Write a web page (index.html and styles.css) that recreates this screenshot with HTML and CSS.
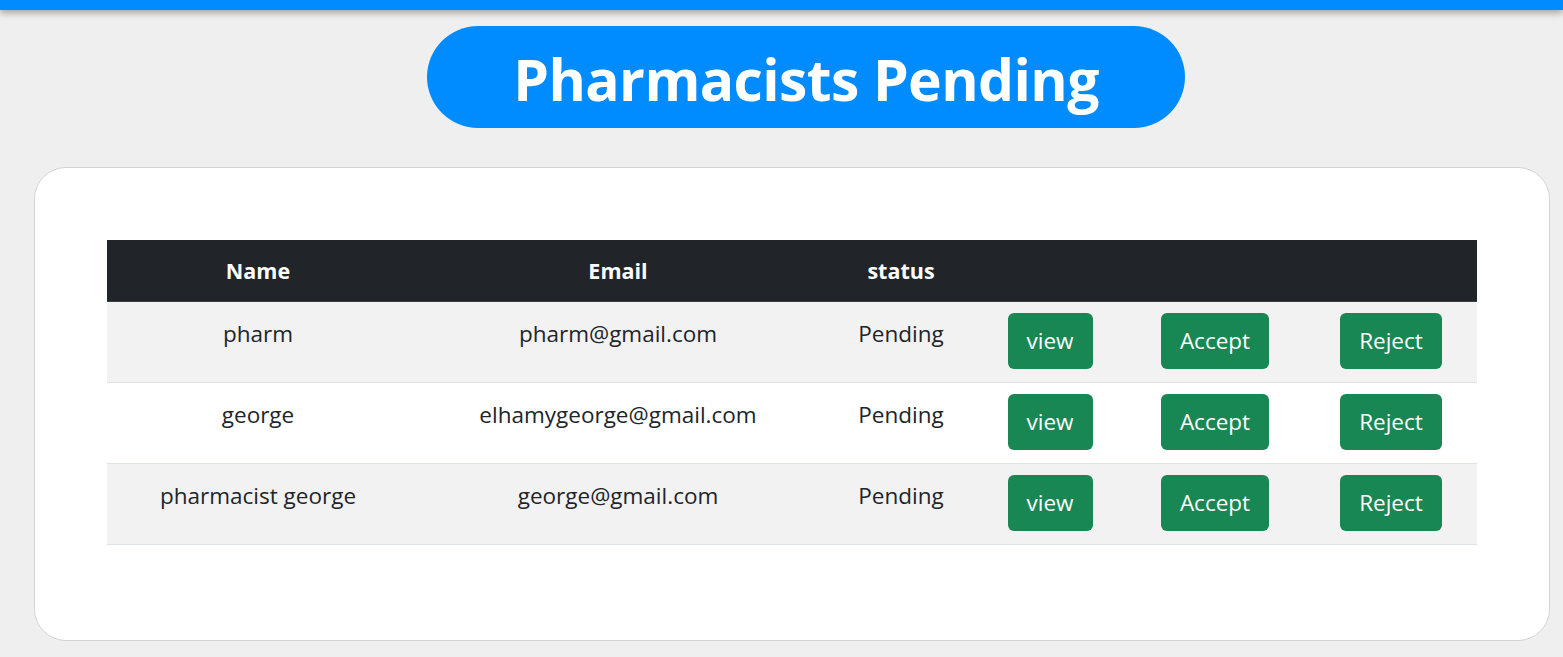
FILE: index.html
```html
<!DOCTYPE html>
<html>
<head>
<meta charset="utf-8">
<link rel="stylesheet" href="styles.css">
</head>
<body>
<div class="topbar"></div>
<div class="title-wrap">
  <h1 class="title">Pharmacists Pending</h1>
</div>
<div class="card">
  <table class="tbl">
    <colgroup>
      <col class="c-name"><col class="c-email"><col class="c-status"><col class="c-view"><col class="c-accept"><col class="c-reject">
    </colgroup>
    <thead>
      <tr><th>Name</th><th>Email</th><th>status</th><th></th><th></th><th></th></tr>
    </thead>
    <tbody>
      <tr class="odd">
        <td>pharm</td><td>pharm@gmail.com</td><td>Pending</td>
        <td class="bc"><button class="btn">view</button></td>
        <td class="bc"><button class="btn">Accept</button></td>
        <td class="bc"><button class="btn">Reject</button></td>
      </tr>
      <tr>
        <td>george</td><td>elhamygeorge@gmail.com</td><td>Pending</td>
        <td class="bc"><button class="btn">view</button></td>
        <td class="bc"><button class="btn">Accept</button></td>
        <td class="bc"><button class="btn">Reject</button></td>
      </tr>
      <tr class="odd">
        <td>pharmacist george</td><td>george@gmail.com</td><td>Pending</td>
        <td class="bc"><button class="btn">view</button></td>
        <td class="bc"><button class="btn">Accept</button></td>
        <td class="bc"><button class="btn">Reject</button></td>
      </tr>
    </tbody>
  </table>
</div>
</body>
</html>
```

FILE: styles.css
```css
* { box-sizing: border-box; }
html, body { margin: 0; padding: 0; }
body {
  background: #efefef;
  font-family: "Open Sans", "Noto Sans", sans-serif;
  color: #212529;
  height: 657px;
  overflow: hidden;
}
.topbar {
  height: 10px;
  background: #008cff;
  box-shadow: 0 3px 7px rgba(0,0,0,0.32);
}
.title-wrap {
  display: flex;
  justify-content: center;
  padding-left: 49px;
  margin-top: 16px;
}
.title {
  margin: 0;
  width: 758px;
  height: 102px;
  border-radius: 51px;
  background: #008cff;
  color: #fff;
  font-size: 57px;
  font-weight: 700;
  letter-spacing: -0.6px;
  display: flex;
  align-items: center;
  justify-content: center;
  padding-top: 4px;
}
.card {
  margin: 39px 13px 0 34px;
  height: 474px;
  background: #fff;
  border: 1px solid #d4d4d4;
  border-radius: 32px;
  padding: 72px 72px 0 72px;
}
.tbl {
  width: 1370px;
  border-collapse: collapse;
  table-layout: fixed;
  font-size: 22.5px;
}
.c-name { width: 302px; }
.c-email { width: 418px; }
.c-status { width: 148px; }
.c-view { width: 150px; }
.c-accept { width: 180px; }
.c-reject { width: 172px; }
.tbl th {
  background: #212529;
  color: #fff;
  font-weight: 700;
  height: 61px;
  padding: 0;
  font-size: 21.5px;
  text-align: center;
  vertical-align: middle;
  border-bottom: 1px solid #3a3d41;
}
.tbl td {
  text-align: center;
  vertical-align: top;
  padding: 15px 0 0 0;
  height: 81px;
  border-bottom: 1px solid #dee2e6;
  line-height: 33px;
}
.tbl tr.odd td { background: #f2f2f2; }
.tbl td.bc { padding-top: 11px; }
.btn {
  background: #198754;
  color: #fff;
  border: none;
  border-radius: 6px;
  font-family: "Open Sans", "Noto Sans", sans-serif;
  font-size: 22.5px;
  height: 56px;
  padding: 0 19px;
  line-height: 56px;
}
```
